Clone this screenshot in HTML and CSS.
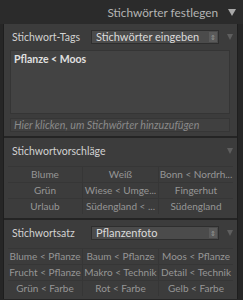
FILE: index.html
```html
<!DOCTYPE html>
<html lang="de">
  <head>
    <meta charset="UTF-8" />
    <meta name="viewport" content="width=device-width, initial-scale=1.0" />
    <title>Stichwörter festlegen</title>
    <link rel="stylesheet" href="styles.css">
  </head>
  <body>
    <header class="panel-head">
      <h1>Stichwörter festlegen</h1>
      <span class="tri tri-big"></span>
    </header>

    <div class="panel">
      <!-- Stichwort-Tags -->
      <section class="block">
        <div class="row">
          <span class="label">Stichwort-Tags</span>
          <div class="select">
            <span>Stichwörter eingeben</span>
            <span class="stepper">&#8661;</span>
          </div>
          <span class="tri"></span>
        </div>
        <div class="tag-area">Pflanze &lt; Moos</div>
        <div class="tag-input">Hier klicken, um Stichwörter hinzuzufügen</div>
      </section>

      <!-- Vorschläge -->
      <section class="block">
        <div class="row">
          <span class="label">Stichwortvorschläge</span>
          <span class="tri"></span>
        </div>
        <div class="grid">
          <span>Blume</span><span>Weiß</span><span>Bonn &lt; Nordrh...</span>
          <span>Grün</span><span>Wiese &lt; Umge...</span><span>Fingerhut</span>
          <span>Urlaub</span><span>Südengland &lt; ...</span><span>Südengland</span>
        </div>
      </section>

      <!-- Stichwortsatz -->
      <section class="block last">
        <div class="row">
          <span class="label">Stichwortsatz</span>
          <div class="select">
            <span>Pflanzenfoto</span>
            <span class="stepper">&#8661;</span>
          </div>
          <span class="tri"></span>
        </div>
        <div class="grid">
          <span>Blume &lt; Pflanze</span><span>Baum &lt; Pflanze</span><span>Moos &lt; Pflanze</span>
          <span>Frucht &lt; Pflanze</span><span>Makro &lt; Technik</span><span>Detail &lt; Technik</span>
          <span>Grün &lt; Farbe</span><span>Rot &lt; Farbe</span><span>Gelb &lt; Farbe</span>
        </div>
      </section>
    </div>
  </body>
</html>
```

FILE: styles.css
```css
body {
  margin: 0;
  padding: 0;
  background-color: #262626;
  font-family: Lato, "Liberation Sans", sans-serif;
  color: #c8c8c8;
  width: 243px;
  height: 300px;
  overflow: hidden;
}
.panel-head {
  height: 24px;
  display: flex;
  align-items: center;
  justify-content: flex-end;
  padding-right: 7px;
  background-color: #2b2b2b;
}
.panel-head h1 {
  margin: 0 10px 0 0;
  font-size: 11.8px;
  font-weight: normal;
  color: #b4b4b4;
}
.tri {
  width: 0;
  height: 0;
  border-left: 3px solid transparent;
  border-right: 3px solid transparent;
  border-top: 6px solid #5e5e5e;
}
.tri-big {
  border-left-width: 4px;
  border-right-width: 4px;
  border-top: 7px solid #a8a8a8;
}
.panel {
  margin: 0 5px 0 3px;
  border-left: 1px solid #1e1e1e;
  border-right: 1px solid #1e1e1e;
  background-color: #3c3c3c;
}
.block {
  padding: 5px 4px 4px 6px;
  border-bottom: 2px solid #242424;
}
.block.last {
  border-bottom: none;
  padding-bottom: 3px;
}
.row {
  display: flex;
  align-items: center;
  height: 15px;
  padding-left: 2px;
}
.label {
  flex: 1;
  font-size: 10.5px;
  color: #d2d2d2;
  white-space: nowrap;
}
.select {
  width: 121px;
  height: 12px;
  margin-right: 8px;
  display: flex;
  align-items: center;
  justify-content: space-between;
  padding: 0 1px 0 4px;
  background-color: #4b4b4b;
  border: 1px solid #2e2e2e;
  font-size: 11px;
  color: #dcdcdc;
}
.stepper {
  width: 8px;
  height: 10px;
  font-size: 7px;
  line-height: 10px;
  text-align: center;
  background-color: #5a5a5a;
  color: #999;
}
.tag-area {
  margin: 6px 3px 0 0;
  height: 58px;
  padding: 2px 3px;
  background-color: #434343;
  border: 1px solid #353535;
  font-size: 10.5px;
  font-weight: bold;
  color: #e0e0e0;
}
.tag-input {
  margin: 4px 3px 0 0;
  height: 12px;
  padding: 0 3px;
  font-size: 10.7px;
  line-height: 12px;
  font-style: italic;
  color: #8a8a8a;
  background-color: #404040;
  border: 1px solid #363636;
}
.grid {
  margin-top: 8px;
  margin-left: -2px;
  display: grid;
  grid-template-columns: 74px 76px 75px;
  border-top: 1px solid #363636;
}
.grid span {
  height: 15px;
  line-height: 15px;
  text-align: center;
  font-size: 10px;
  color: #969696;
  border-bottom: 1px solid #363636;
  border-left: 1px solid #363636;
  white-space: nowrap;
  overflow: hidden;
}
.grid span:nth-child(3n+1) {
  border-left: none;
}
.grid span:nth-last-child(-n+3) {
  border-bottom: none;
}
```
